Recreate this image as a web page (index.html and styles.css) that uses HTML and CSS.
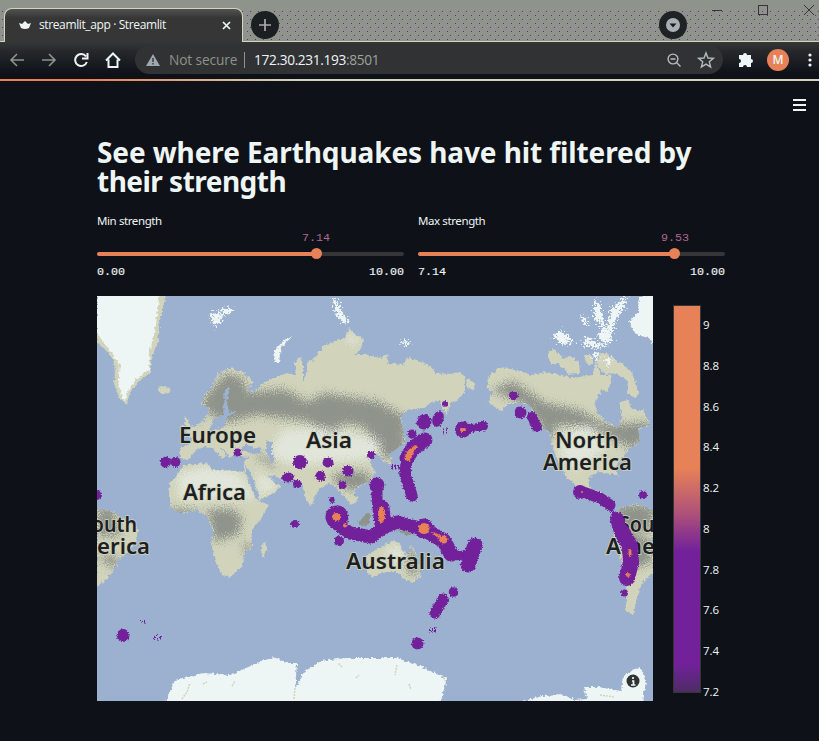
FILE: index.html
```
<!DOCTYPE html>
<html lang="en">
<head>
<meta charset="utf-8">
<title>streamlit_app · Streamlit</title>
<link rel="stylesheet" href="styles.css">
</head>
<body>
<div class="tabstrip">
  <div class="tab">
    <svg class="crown" width="14" height="10" viewBox="0 0 14 10"><path d="M1 3l3 1 3-3 3 3 3-1-2 5q-4 2-8 0z" fill="#eef5f5"/></svg>
    <span class="tab-title">streamlit_app · Streamlit</span>
    <svg class="tab-close" width="9" height="9" viewBox="0 0 9 9"><path d="M1 1l7 7M8 1L1 8" stroke="#eef5f5" stroke-width="1.700"/></svg>
  </div>
  <svg class="new-tab" width="28" height="28" viewBox="0 0 28 28"><circle cx="14" cy="14" r="14" fill="#1c1f22"/><path d="M14 8v12M8 14h12" stroke="#a9adab" stroke-width="1.700"/></svg>
  <svg class="media" width="28" height="28" viewBox="0 0 28 28"><circle cx="14" cy="14" r="14" fill="#202326"/><circle cx="14" cy="14" r="7" fill="#a9b0b5"/><path d="M10.500 12.500h7l-3.500 4z" fill="#15181c"/></svg>
  <svg class="window-buttons" width="110" height="18" viewBox="0 0 110 18" fill="none" stroke="#363636"><path d="M3 10.500h10M95 5l10 10M105 5L95 15"/><rect x="49.500" y="5.500" width="9" height="9"/></svg>
</div>
<div class="toolbar">
  <svg class="nav" width="124" height="20" viewBox="0 0 124 20" fill="none" stroke="#8e938b" stroke-width="1.600">
    <path d="M24 10H11M17 4l-6 6 6 6M42 10h13M49 4l6 6-6 6"/>
    <g stroke="#eef5f5" stroke-width="2"><path d="M86 6.500a6 6 0 1 0 .8 5.500M87.500 3v5.500H82"/><path d="M106 10.500l7-7 7 7M108.500 9.500v7.500h9V9.500"/></g>
  </svg>
  <div class="address">
    <svg width="14" height="12" viewBox="0 0 14 12"><path d="M7 0l7 12H0z" fill="#9ea8b1"/><path d="M7 4v4M7 9v1.500" stroke="#363636" stroke-width="1.400"/></svg>
    <span class="insecure">Not secure</span><i class="divider"></i>
    <span class="url">172.30.231.193<span class="port">:8501</span></span>
    <svg class="addr-icons" width="50" height="20" viewBox="0 0 50 20" fill="none" stroke="#b5bdbd" stroke-width="1.400"><circle cx="6" cy="9" r="4.900"/><path d="M3.500 9h5M9.500 12.500l4 4" /><path d="M39 3l2 5 5.400.4-4.100 3.400 1.300 5.200-4.600-2.900-4.600 2.900 1.300-5.200-4.100-3.400 5.400-.4z"/></svg>
  </div>
  <svg class="puzzle" width="15" height="15" viewBox="0 0 15 15"><path d="M1 3h4a2 2 0 1 1 4 0h4v4a2 2 0 1 1 0 4v4H9a2 2 0 0 0-4 0H1v-4a2 2 0 0 0 0-4z" fill="#eef5f5"/></svg>
  <span class="avatar">M</span>
  <svg class="dots" width="4" height="14" viewBox="0 0 4 14" fill="#eef5f5"><circle cx="2" cy="2" r="1.600"/><circle cx="2" cy="7" r="1.600"/><circle cx="2" cy="12" r="1.600"/></svg>
</div>
<main class="app">
  <svg class="menu" width="13" height="12" viewBox="0 0 13 12"><path d="M0 1h13M0 6h13M0 11h13" stroke="#eef5f5" stroke-width="2"/></svg>
  <h1><span class="line-one">See where Earthquakes have hit filtered by</span><span class="line-two">their strength</span></h1>
  <div class="sliders">
    <div class="slider min">
      <div class="label">Min strength</div>
      <div class="value">7.14</div>
      <div class="track"><i class="fill"></i><i class="thumb"></i></div>
      <div class="range"><span>0.00</span><span>10.00</span></div>
    </div>
    <div class="slider max">
      <div class="label">Max strength</div>
      <div class="value">9.53</div>
      <div class="track"><i class="fill"></i><i class="thumb"></i></div>
      <div class="range"><span>7.14</span><span>10.00</span></div>
    </div>
  </div>
  <div class="chart">
    <svg class="map" width="556" height="405" viewBox="97 296 556 405">
      <defs>
        <filter id="coast" x="97" y="296" width="556" height="405" filterUnits="userSpaceOnUse"><feTurbulence type="fractalNoise" baseFrequency=".35" numOctaves="2" seed="4" result="n"/><feDisplacementMap in="SourceGraphic" in2="n" scale="5" xChannelSelector="R" yChannelSelector="G"/></filter>
        <filter id="islands" x="97" y="296" width="556" height="405" filterUnits="userSpaceOnUse"><feTurbulence type="fractalNoise" baseFrequency=".5" numOctaves="2" seed="7" result="n"/><feDisplacementMap in="SourceGraphic" in2="n" scale="14" xChannelSelector="R" yChannelSelector="G"/></filter>
        <filter id="grain" x="97" y="296" width="556" height="405" filterUnits="userSpaceOnUse" color-interpolation-filters="sRGB"><feGaussianBlur stdDeviation="3.500" result="b"/><feTurbulence type="fractalNoise" baseFrequency=".9" numOctaves="1" seed="9" result="n"/><feDisplacementMap in="b" in2="n" scale="22" xChannelSelector="R" yChannelSelector="G"/></filter>
        <filter id="heat" x="97" y="296" width="556" height="405" filterUnits="userSpaceOnUse" color-interpolation-filters="sRGB"><feTurbulence type="fractalNoise" baseFrequency=".7" numOctaves="1" seed="2" result="n"/><feDisplacementMap in="SourceGraphic" in2="n" scale="4" xChannelSelector="R" yChannelSelector="G"/></filter>
        <clipPath id="land">
          <path id="eurasia" d="M202 405L204 395 212 387 217 375 230 368 242 372 254 382 250 386 247 391 254 392 264 382 287 373 295 375 295 362 300 357 303 363 303 382 307 370 307 362 313 360 318 353 325 345 337 340 345 338 349 328 355 334 363 338 362 348 355 355 367 355 380 358 387 355 388 363 403 365 408 358 420 361 433 368 435 373 450 374 460 372 465 377 465 392 457 401 451 402 447 414 442 408 440 401 430 403 423 408 407 410 400 418 403 428 405 442 398 448 388 455 393 462 388 465 380 456 372 454 370 462 375 472 370 482 360 485 353 491 358 500 352 505 345 497 338 490 330 483 320 488 315 497 311 507 305 497 302 483 296 480 287 481 277 477 269 475 281 486 274 493 259 501 250 483 244 470 244 462 249 457 238 456 234 452 230 459 226 452 220 447 226 456 222 459 213 448 205 446 196 450 188 460 180 458 180 447 191 444 192 438 184 434 192 427 204 421 209 412 210 408z"/>
          <path id="africa" d="M170 482l7-7 7-10 23-2 5 7h12l20 2 13 28 12 5-9 15-8 10v17l-7 6-3 14-12 10-8-2-7-15-4-17 3-13-7-13-10-7-17 3-10-6-1-10z"/>
          <path id="america" d="M488 377L500 367 515 370 532 375 545 372 562 375 572 378 593 375 595 362 602 375 612 375 608 392 602 390 595 402 597 412 608 423 617 428 622 418 620 402 628 400 633 410 643 410 650 425 638 428 640 442 630 448 622 458 615 468 619 477 612 474 598 472 590 477 589 487 603 494 596 496 578 488 565 475 558 462 552 445 550 432 543 428 538 420 532 408 525 403 508 403 502 412 488 402 492 392 487 387z"/>
          <path id="south" d="M620 508l18-4 15 6v63l-11 10-4 10-3 14-2 8-8-5 3-17-5-26-8-24-3-20z"/>
          <path id="south-left" d="M97 508l17 4 25 18-4 13-16 17-7 13-10 10-5 4z"/>
          <path id="oz" d="M367 555l13-7 13-8 9 5-1 5 8 3 3-10 3 12 7 8-2 14-8 6-9-5-5-6-15 0-11 5-5-5z"/>
        </clipPath>
      </defs>
      <rect x="97" y="296" width="556" height="405" fill="#9bb1cf"/>
      <g filter="url(#coast)" fill="#d1d4bb">
        <path d="M97 290h70l-8 35-1 20-6 10-2 18-8 6-11 12-5 13-7-6-5-14 1-12-2-14-16-17z"/>
        <use href="#eurasia"/><use href="#africa"/><use href="#america"/><use href="#south"/><use href="#south-left"/><use href="#oz"/>
        <ellipse cx="164" cy="390" rx="6" ry="4"/><path d="M184 416l3 2 6 14-8 3 1-8zM180 428l4-3 1 6-4 2zM261 547l5-6 1 9-5 9zM467 378l9 6-2 6-8-3zM548 353l6-4 9 9 8-2 8 7 1 10-12 1-8-9-10-2zM600 352l8 2 12 9 10 7 5 10 4 14-4 4-8-5 1-12-12-8-12 1-8-11zM584 355h8l1 8-7 2z"/>
      </g>
      <g clip-path="url(#land)">
        <g filter="url(#grain)" fill="#8e938b">
          <path d="M206 395l20-22 17 5 4 14 38-3 22 13 18-9 54 9 21 12 2 11-22 18-18-17-18-3-12 13-25-15-50-6-32 8-18-12-12 15z"/>
          <path d="M360 420l45-6v38l-18 8zM332 475l20-4 17 2 2 12-18 6-18-8zM252 455l20 1 4 14-10-8zM207 510l25-1 10 8-3 17-24 8-4-15zM170 508l30 3-5 7-24-3zM242 544h12l-7 12zM491 390l22-9 32 22 34 7 27 15 44-3 2 12-20 15-21-11-23-11-31-2-8 18-11-21-14-18zM615 505h38v25h-28l30 12-5 22-20 4z"/>
          <path d="M97 508h16l8 28h-24zM97 555l24 2-8 12zM405 550h13v25h-9z"/>
        </g>
        <g filter="url(#grain)" fill="#eef5f5" opacity=".55"><path d="M178 474l27-7 31 4 20 27-76 2zM257 471l22 14-19 12zM282 430l46-2 54 13-7 17-70 6-38-5zM558 435l30-10 22 20-32 24-15-6zM385 550l13-4 12 10-13 10zM347 334l15 4-12 8z"/></g>
      </g>
      <g fill="#9bb1cf" filter="url(#coast)"><path d="M225 390l5-3-3 15 2 10h8l-9 4-4 11-16 6 6-14 9-4zM240 449l6-5 8 5 6-2 2 6-10 1zM266 441l6 1v11l3 8-4 2-5-12zM245 465l5 6 9 25-2 3-8-16zM266 474l10 7 5 0-4 4z"/></g>
      <path d="M370 524l-8 2-4-4q4-4 8-8l4-2zM395 530l20 2-6 4z" fill="#8e938b" filter="url(#coast)"/>
      <g fill="#eef5f5" filter="url(#coast)">
        <path d="M97 290h63l-4 35-6 25-1 20-12 8-9 13-4 12-6-20 2-18-23-32z"/>
        <path d="M660 290l-21 8-1 14-9 10 8 13 12 3 8 14zM164 705l11-25 29-7 26 2 14-6 13-6 17-6 13 6h10l-2 26 9-17 16-11 27-3h50l23 8 27 13-8 28zM517 703l25-7 23-1 8 5 14-1-3-12 15 0 22 4 2-15 7-4 10-5 6 13-3 23z"/>
        <path d="M274 362l1-12 9-10 9-4-12 11-2 15z"/>
      </g>
      <g fill="#eef5f5" filter="url(#islands)"><path d="M210 313l13 1-3 9-6 4zM221 309l12-1-3 6-8 1zM333 299l5 2 6 15 6 5-5 3-9-10zM400 341l12 1-7 4zM553 336l7-6 15 13-14 1zM580 316l6 2 4 8-6-2zM594 300l6 5 5 22 8 12-8 5-8-9 6-7-9-10zM611 309l16-13-3 11-8 12-5 17-4-8zM585 336l13 7 12 1-14 4-12-3zM594 352l5 1-2 8-4-4zM604 358l8 2-4 6z"/></g>
      <path d="M182 699l5-7 3-9M232 686l3-5M295 688l-1 12M342 667l-4-4M397 665l-2 10M356 678l3-3M409 684l2 6M442 675l4 7M203 684l4-2M600 695l14 2" fill="none" stroke="#d1d4bb" stroke-width="1.500" stroke-dasharray="2 1"/>
      <g class="map-label" font-size="21">
        <text x="179" y="443" textLength="77" lengthAdjust="spacingAndGlyphs">Europe</text>
        <text x="306" y="448" textLength="46" lengthAdjust="spacingAndGlyphs">Asia</text>
        <text x="183" y="500" textLength="63" lengthAdjust="spacingAndGlyphs">Africa</text>
        <text x="346" y="569" textLength="99" lengthAdjust="spacingAndGlyphs">Australia</text>
        <text x="555" y="448" textLength="64" lengthAdjust="spacingAndGlyphs">North</text>
        <text x="543" y="470" textLength="89" lengthAdjust="spacingAndGlyphs">America</text>
        <text x="81" y="532" textLength="56" lengthAdjust="spacingAndGlyphs">South</text>
        <text x="61" y="554" textLength="89" lengthAdjust="spacingAndGlyphs">America</text>
        <text x="619" y="532" textLength="56" lengthAdjust="spacingAndGlyphs">South</text>
        <text x="606" y="554" textLength="89" lengthAdjust="spacingAndGlyphs">America</text>
      </g>
      <g filter="url(#heat)">
        <g fill="#72219b">
          <circle cx="165.500" cy="462" r="5.500"/><circle cx="175.500" cy="462" r="5"/><circle cx="237.500" cy="452.500" r="4"/><circle cx="97" cy="495" r="5"/><circle cx="300" cy="462" r="7"/><ellipse cx="328" cy="462.500" rx="5.500" ry="5"/><ellipse cx="288" cy="477.500" rx="6" ry="5"/><circle cx="297" cy="484" r="4"/><circle cx="320.500" cy="476" r="5"/><circle cx="348" cy="471" r="5.500"/><circle cx="342.500" cy="485" r="4"/><circle cx="371" cy="455" r="4"/>
          <circle cx="424" cy="422" r="7.500"/><ellipse cx="438" cy="419" rx="5.500" ry="8" transform="rotate(20 438 419)"/><circle cx="445" cy="404" r="3"/><circle cx="412" cy="434" r="4.500"/>
          <circle cx="463" cy="429.500" r="8"/><circle cx="483" cy="426" r="5"/>
          <circle cx="337" cy="517" r="11.500"/><circle cx="423.500" cy="528.500" r="10"/><circle cx="377" cy="485" r="7.500"/>
          <circle cx="332" cy="500" r="3"/><circle cx="339" cy="541" r="5"/><circle cx="295" cy="524" r="4"/>
          <circle cx="453.500" cy="592" r="4.800"/><circle cx="417.500" cy="643.500" r="6"/><circle cx="123" cy="635.500" r="6.500"/>
          <circle cx="513.500" cy="395.500" r="4.500"/><circle cx="520.500" cy="412.500" r="6"/><circle cx="624.500" cy="593" r="3.500"/><circle cx="643" cy="495" r="4"/><circle cx="580" cy="492" r="7"/>
        </g>
        <g fill="none" stroke="#72219b" stroke-linecap="round" stroke-linejoin="round">
          <path d="M425 440L413 448 407 458" stroke-width="15"/><path d="M407 458L405 474 412 496" stroke-width="11.500"/>
          <path d="M377 487L377 501" stroke-width="11"/><path d="M381 508L383 525" stroke-width="17"/>
          <path d="M337 524L350 533 371 537 383 528 397 522 415 527" stroke-width="13"/>
          <path d="M427 531L444 541 451 554" stroke-width="15"/><path d="M453 556L466 555" stroke-width="9"/><path d="M475 545L468 565" stroke-width="15"/>
          <path d="M463 430L483 426" stroke-width="8"/><path d="M532 417L537 427" stroke-width="10"/><path d="M443 599L435 613" stroke-width="11"/>
          <path d="M583 492L600 498 610 505" stroke-width="11"/><path d="M617 519L621 532" stroke-width="14"/><path d="M622 532L630 546 631 562 627 578" stroke-width="16"/><path d="M609 507L616 516" stroke-width="3" stroke-dasharray="1 2"/>
        </g>
        <g fill="none" stroke="#72219b" stroke-width="5" stroke-dasharray="1 2"><path d="M429 630h7M141 621h6M154 637h7M392 467h7M443 431h6"/></g>
        <g fill="#e78157"><ellipse cx="336.500" cy="517" rx="4.500" ry="4"/><path d="M404 459l3-8 8-6 3 1-5 7-3 8-5-1z"/><ellipse cx="381.500" cy="515" rx="3.500" ry="8"/><circle cx="424" cy="528.500" r="5.500"/><circle cx="443.500" cy="539.500" r="4"/><path d="M431 532l5 1 5 3-2 3z"/><ellipse cx="463" cy="430" rx="3" ry="2"/><ellipse cx="630" cy="553" rx="1.500" ry="4"/><circle cx="628" cy="575" r="2"/><circle cx="345" cy="525.500" r="2"/><circle cx="582" cy="492" r="1"/></g>
      </g>
      <circle cx="633" cy="681" r="6.500" fill="#303334"/><path d="M633 677v2M632 681h1.500v4M631 685h4.500" stroke="#eef5f5" stroke-width="1.700" fill="none"/>
    </svg>
    <div class="colorbar"></div>
    <div class="ticks"><span>9</span><span>8.8</span><span>8.6</span><span>8.4</span><span>8.2</span><span>8</span><span>7.8</span><span>7.6</span><span>7.4</span><span>7.2</span></div>
  </div>
</main>
</body>
</html>
```
FILE: styles.css
```
* { box-sizing: border-box; }
html, body { margin: 0; height: 741px; overflow: hidden; background: #0e1117; }
body { font-family: "Open Sans", sans-serif; color: #eef5f5; }
svg { display: block; flex: none; }
.tabstrip {
  display: flex; align-items: flex-start; height: 42px; padding-left: 4px;
  border-bottom: 1px solid #d1d4bb;
  background:
    linear-gradient(#8e938b 8px, transparent 8px),
    linear-gradient(90deg, #8e938b 245px, transparent 245px),
    conic-gradient(from 90deg at 5px 5px, #72219b 25%, transparent 0) 0 0 / 6px 6px,
    #8e938b;
}
.tabstrip {
  background:
    linear-gradient(#8e938b 8px, transparent 8px),
    conic-gradient(from 90deg at 7px 7px, #72219b 25%, transparent 0) 0 0 / 8px 8px,
    conic-gradient(from 90deg at 7px 7px, #72219b 25%, transparent 0) 3px 4px / 8px 8px,
    #8e938b;
}
.tab {
  display: flex; align-items: center; width: 239px; height: 34px; margin-top: 8px; padding: 0 12px 1px 13px;
  border: 1px solid #d1d4bb; border-bottom: 0; border-radius: 8px 8px 0 0;
  background: linear-gradient(#505250, #363636 9px);
}
.tab-title { margin-left: 7px; font-size: 12px; letter-spacing: -.38px; white-space: nowrap; }
.tab-title, .crown { margin-top: -1px; }
.tab-close { margin-left: auto; margin-right: -1px; }
.new-tab { margin: 11px 0 0 8px; }
.media { margin: 11px 0 0 auto; }
.window-buttons { margin: 0 0 0 22px; }
.toolbar {
  display: flex; align-items: center; height: 39px; padding-bottom: 2px;
  background: linear-gradient(#363636 0, #24272b 10px, #0e1117 32px);
  border-bottom: 2px solid #d1d4bb; border-image: linear-gradient(90deg, #e78157 90px, #d1d4bb 300px) 1;
}
.address {
  display: flex; align-items: center; width: 588px; height: 29px; margin-left: 11px; padding-left: 11px;
  border-radius: 15px; background: #303234; font-size: 13.700px; white-space: nowrap;
}
.insecure { width: 68px; margin-left: 9px; color: #8e938b; letter-spacing: -.1px; }
.divider { width: 1px; height: 16px; margin: 0 9px 0 7px; background: #8e938b; }
.url { letter-spacing: -.35px; }
.port { color: #9da29c; }
.addr-icons { margin: 0 6px 0 auto; }
.puzzle { margin-left: 15px; }
.avatar {
  width: 22px; height: 22px; margin-left: 14px; border-radius: 50%; background: #e78157;
  text-align: center; font: 600 12px/22px "Open Sans", sans-serif;
}
.dots { margin-left: 19px; }
.app { height: 660px; padding: 18px 94px 0 97px; background: #0e1117; }
.menu { margin-left: 696px; }
h1 { display: grid; margin: 27px 0 0; font: 700 28px/29px "Noto Sans", sans-serif; height: 58px; white-space: nowrap; }
.line-one { letter-spacing: -.1px; }
.line-two { letter-spacing: -.52px; }
.sliders { display: flex; gap: 14px; margin-top: 17px; }
.slider { width: 307px; }
.label { font: 11.500px/16px "Noto Sans", sans-serif; letter-spacing: -.4px; }
.value { height: 16px; margin-top: 1px; width: 28px; font: 11.700px/16px "Liberation Mono", monospace; color: #ab6a91; }
.track { position: relative; height: 4px; margin-top: 6px; border-radius: 2px; background: #363636; }
.fill { display: block; height: 4px; border-radius: 2px; background: #e78157; }
.thumb { position: absolute; top: -4px; width: 11px; height: 11px; border-radius: 50%; background: #e78157; }
.min .value { margin-left: 205px; }
.max .value { margin-left: 243px; }
.min .fill { width: 219px; }
.max .fill { width: 256px; }
.min .thumb { left: 214px; }
.max .thumb { left: 251px; }
.range { display: flex; justify-content: space-between; margin-top: 8px; font: 11.700px/16px "Liberation Mono", monospace; -webkit-text-stroke: .15px #eef5f5; }
.chart { display: flex; margin-top: 16px; }
.map-label { font-family: "Noto Sans", sans-serif; font-weight: 600; fill: #1c2024; stroke: #d1d4bb; stroke-width: 1.500px; paint-order: stroke; }
.colorbar {
  width: 28px; height: 388px; margin: 9px 0 0 20px; border: 1px solid #363636;
  background: linear-gradient(#e78157 162px, #ad5179 208px, #72219b 245px, #72219b 357px, #4b2d62 388px);
}
.ticks { display: flex; flex-direction: column; justify-content: space-between; height: 383px; margin: 21px 0 0 2px; font: 500 11.500px/16px "Open Sans", sans-serif; }
```
